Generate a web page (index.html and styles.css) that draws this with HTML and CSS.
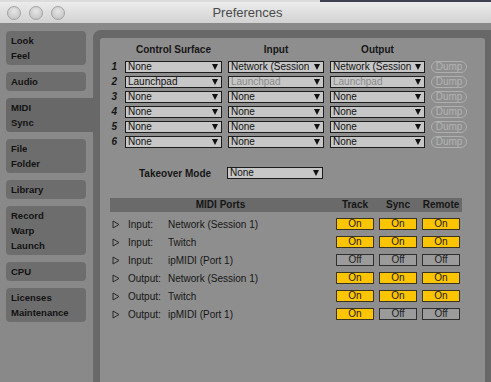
FILE: index.html
```html
<!DOCTYPE html>
<html lang="en">
<head>
    <meta charset="UTF-8">
    <title>Preferences</title>
    <link rel="stylesheet" href="styles.css">
</head>
<body>
    <div class="desktop-edge"></div>
    <header class="titlebar">
        <div class="lights">
            <span class="light"></span>
            <span class="light"></span>
            <span class="light"></span>
        </div>
        <div class="title">Preferences</div>
        <div></div>
    </header>

    <div class="window">
        <nav class="sidebar">
            <div class="tab">Look<br>Feel</div>
            <div class="tab">Audio</div>
            <div class="tab active">MIDI<br>Sync</div>
            <div class="tab">File<br>Folder</div>
            <div class="tab">Library</div>
            <div class="tab">Record<br>Warp<br>Launch</div>
            <div class="tab">CPU</div>
            <div class="tab">Licenses<br>Maintenance</div>
        </nav>

        <div class="frame">
            <main class="panel">
                <!-- control surface setup -->
                <div class="surfaces">
                    <div></div>
                    <div class="col-head">Control Surface</div>
                    <div class="col-head">Input</div>
                    <div class="col-head">Output</div>
                    <div></div>

                    <div class="num">1</div>
                    <div class="select"><span>None</span></div>
                    <div class="select"><span>Network (Session 1)</span></div>
                    <div class="select"><span>Network (Session 1)</span></div>
                    <div class="dump">Dump</div>

                    <div class="num">2</div>
                    <div class="select"><span>Launchpad</span></div>
                    <div class="select disabled"><span>Launchpad</span></div>
                    <div class="select disabled"><span>Launchpad</span></div>
                    <div class="dump">Dump</div>

                    <div class="num">3</div>
                    <div class="select"><span>None</span></div>
                    <div class="select"><span>None</span></div>
                    <div class="select"><span>None</span></div>
                    <div class="dump">Dump</div>

                    <div class="num">4</div>
                    <div class="select"><span>None</span></div>
                    <div class="select"><span>None</span></div>
                    <div class="select"><span>None</span></div>
                    <div class="dump">Dump</div>

                    <div class="num">5</div>
                    <div class="select"><span>None</span></div>
                    <div class="select"><span>None</span></div>
                    <div class="select"><span>None</span></div>
                    <div class="dump">Dump</div>

                    <div class="num">6</div>
                    <div class="select"><span>None</span></div>
                    <div class="select"><span>None</span></div>
                    <div class="select"><span>None</span></div>
                    <div class="dump">Dump</div>
                </div>

                <div class="takeover">
                    <div class="takeover-label">Takeover Mode</div>
                    <div class="select"><span>None</span></div>
                </div>

                <!-- midi ports -->
                <div class="ports">
                    <div class="ports-head">
                        <div>MIDI Ports</div>
                        <div>Track</div>
                        <div>Sync</div>
                        <div>Remote</div>
                    </div>
                    <div class="ports-rows">
                        <div class="port">
                            <div class="port-name"><svg class="arrow" width="8" height="9" viewBox="0 0 8 9"><polygon points="1,1 7,4.5 1,8" fill="none" stroke="#2a2a2a" stroke-width="1"/></svg><span class="kind">Input:</span>Network (Session 1)</div>
                            <div class="toggle on">On</div>
                            <div class="toggle on">On</div>
                            <div class="toggle on">On</div>
                        </div>
                        <div class="port">
                            <div class="port-name"><svg class="arrow" width="8" height="9" viewBox="0 0 8 9"><polygon points="1,1 7,4.5 1,8" fill="none" stroke="#2a2a2a" stroke-width="1"/></svg><span class="kind">Input:</span>Twitch</div>
                            <div class="toggle on">On</div>
                            <div class="toggle on">On</div>
                            <div class="toggle on">On</div>
                        </div>
                        <div class="port">
                            <div class="port-name"><svg class="arrow" width="8" height="9" viewBox="0 0 8 9"><polygon points="1,1 7,4.5 1,8" fill="none" stroke="#2a2a2a" stroke-width="1"/></svg><span class="kind">Input:</span>ipMIDI (Port 1)</div>
                            <div class="toggle">Off</div>
                            <div class="toggle">Off</div>
                            <div class="toggle">Off</div>
                        </div>
                        <div class="port">
                            <div class="port-name"><svg class="arrow" width="8" height="9" viewBox="0 0 8 9"><polygon points="1,1 7,4.5 1,8" fill="none" stroke="#2a2a2a" stroke-width="1"/></svg><span class="kind">Output:</span>Network (Session 1)</div>
                            <div class="toggle on">On</div>
                            <div class="toggle on">On</div>
                            <div class="toggle on">On</div>
                        </div>
                        <div class="port">
                            <div class="port-name"><svg class="arrow" width="8" height="9" viewBox="0 0 8 9"><polygon points="1,1 7,4.5 1,8" fill="none" stroke="#2a2a2a" stroke-width="1"/></svg><span class="kind">Output:</span>Twitch</div>
                            <div class="toggle on">On</div>
                            <div class="toggle on">On</div>
                            <div class="toggle on">On</div>
                        </div>
                        <div class="port">
                            <div class="port-name"><svg class="arrow" width="8" height="9" viewBox="0 0 8 9"><polygon points="1,1 7,4.5 1,8" fill="none" stroke="#2a2a2a" stroke-width="1"/></svg><span class="kind">Output:</span>ipMIDI (Port 1)</div>
                            <div class="toggle on">On</div>
                            <div class="toggle">Off</div>
                            <div class="toggle">Off</div>
                        </div>
                    </div>
                </div>
            </main>
        </div>
    </div>
</body>
</html>
```

FILE: styles.css
```css
body {
    margin: 0;
    width: 491px;
    height: 382px;
    overflow: hidden;
    background-color: #898989;
    font-family: "Liberation Sans", Arial, sans-serif;
    font-size: 10px;
    color: #161616;
}

.desktop-edge {
    height: 2px;
    background: linear-gradient(to right, #dcdcdc 0, #dcdcdc 320px, #3b4150 320px, #3b4150 100%);
}

.titlebar {
    display: grid;
    grid-template-columns: 1fr auto 1fr;
    align-items: center;
    height: 21px;
    background: linear-gradient(#ececec, #d2d2d2);
}

.lights {
    display: flex;
    gap: 8px;
    padding-left: 7px;
}

.light {
    width: 12px;
    height: 12px;
    border-radius: 50%;
    border: 1px solid #a3a3a3;
    background: radial-gradient(circle at 50% 35%, #e6e6e6, #bdbdbd);
}

.title {
    font-size: 13px;
    color: #4a4a4a;
    padding-left: 4px;
}

.window {
    display: flex;
    height: 359px;
}

/* left tabs */
.sidebar {
    width: 87px;
    padding: 8px 0 0 6px;
}

.tab {
    width: 70px;
    padding: 2px 5px;
    margin-bottom: 7px;
    line-height: 15px;
    font-size: 9.5px;
    font-weight: bold;
    color: #121212;
    background-color: #6d6d6d;
    border-radius: 4px;
}

.tab.active {
    width: 77px;
    background-color: #686868;
    border-radius: 4px 0 0 4px;
}

.frame {
    flex: 1;
    margin-top: 7px;
    padding: 8px 6px 0 7px;
    background-color: #686868;
    border-radius: 8px 0 0 0;
}

.panel {
    height: 100%;
    padding-top: 6px;
    background-color: #8e8e8e;
    border-radius: 3px 3px 0 0;
}

/* control surfaces */
.surfaces {
    display: grid;
    grid-template-columns: 19px 97px 96px 95px 36px;
    grid-template-rows: 14px;
    grid-auto-rows: 12px;
    column-gap: 6px;
    row-gap: 3px;
}

.col-head {
    font-weight: bold;
    text-align: center;
    line-height: 12px;
}

.num {
    font-weight: bold;
    font-style: italic;
    text-align: right;
    line-height: 12px;
    padding-right: 2px;
}

.select {
    display: flex;
    align-items: center;
    gap: 3px;
    height: 12px;
    box-sizing: border-box;
    padding: 0 3px 0 2px;
    background-color: #c7c7c7;
    border: 1px solid #1c1c1c;
    color: #111;
    line-height: 10px;
    white-space: nowrap;
}

.select span {
    flex: 1;
    overflow: hidden;
}

.select::after {
    content: "";
    flex: none;
    border-left: 3.5px solid transparent;
    border-right: 3.5px solid transparent;
    border-top: 6px solid #111;
}

.select.disabled span {
    color: #8a8a8a;
}

.dump {
    height: 12px;
    box-sizing: border-box;
    border: 1px solid #afafaf;
    border-radius: 6px;
    color: #b3b3b3;
    text-align: center;
    line-height: 10px;
}

.takeover {
    display: flex;
    align-items: center;
    margin-top: 19px;
    padding-left: 39px;
}

.takeover-label {
    width: 88px;
    font-weight: bold;
}

.takeover .select {
    width: 96px;
}

/* midi ports */
.ports {
    width: 352px;
    margin: 19px 0 0 10px;
}

.ports-head,
.port {
    display: grid;
    grid-template-columns: 1fr 38px 38px 38px;
    column-gap: 5px;
    padding-right: 2px;
}

.ports-head {
    height: 14px;
    line-height: 14px;
    background-color: #6a6a6a;
    font-weight: bold;
    text-align: center;
}

.ports-rows {
    margin-top: 3px;
}

.port {
    height: 18px;
    align-items: center;
}

.port-name {
    display: flex;
    align-items: center;
    color: #161616;
}

.arrow {
    margin: 0 8px 0 2px;
}

.kind {
    width: 40px;
}

.toggle {
    height: 12px;
    box-sizing: border-box;
    border: 1px solid #2f2f2f;
    background-color: #9b9b9b;
    color: #222;
    text-align: center;
    line-height: 10px;
}

.toggle.on {
    background-color: #fdc400;
    border-color: #3a3322;
}
```
